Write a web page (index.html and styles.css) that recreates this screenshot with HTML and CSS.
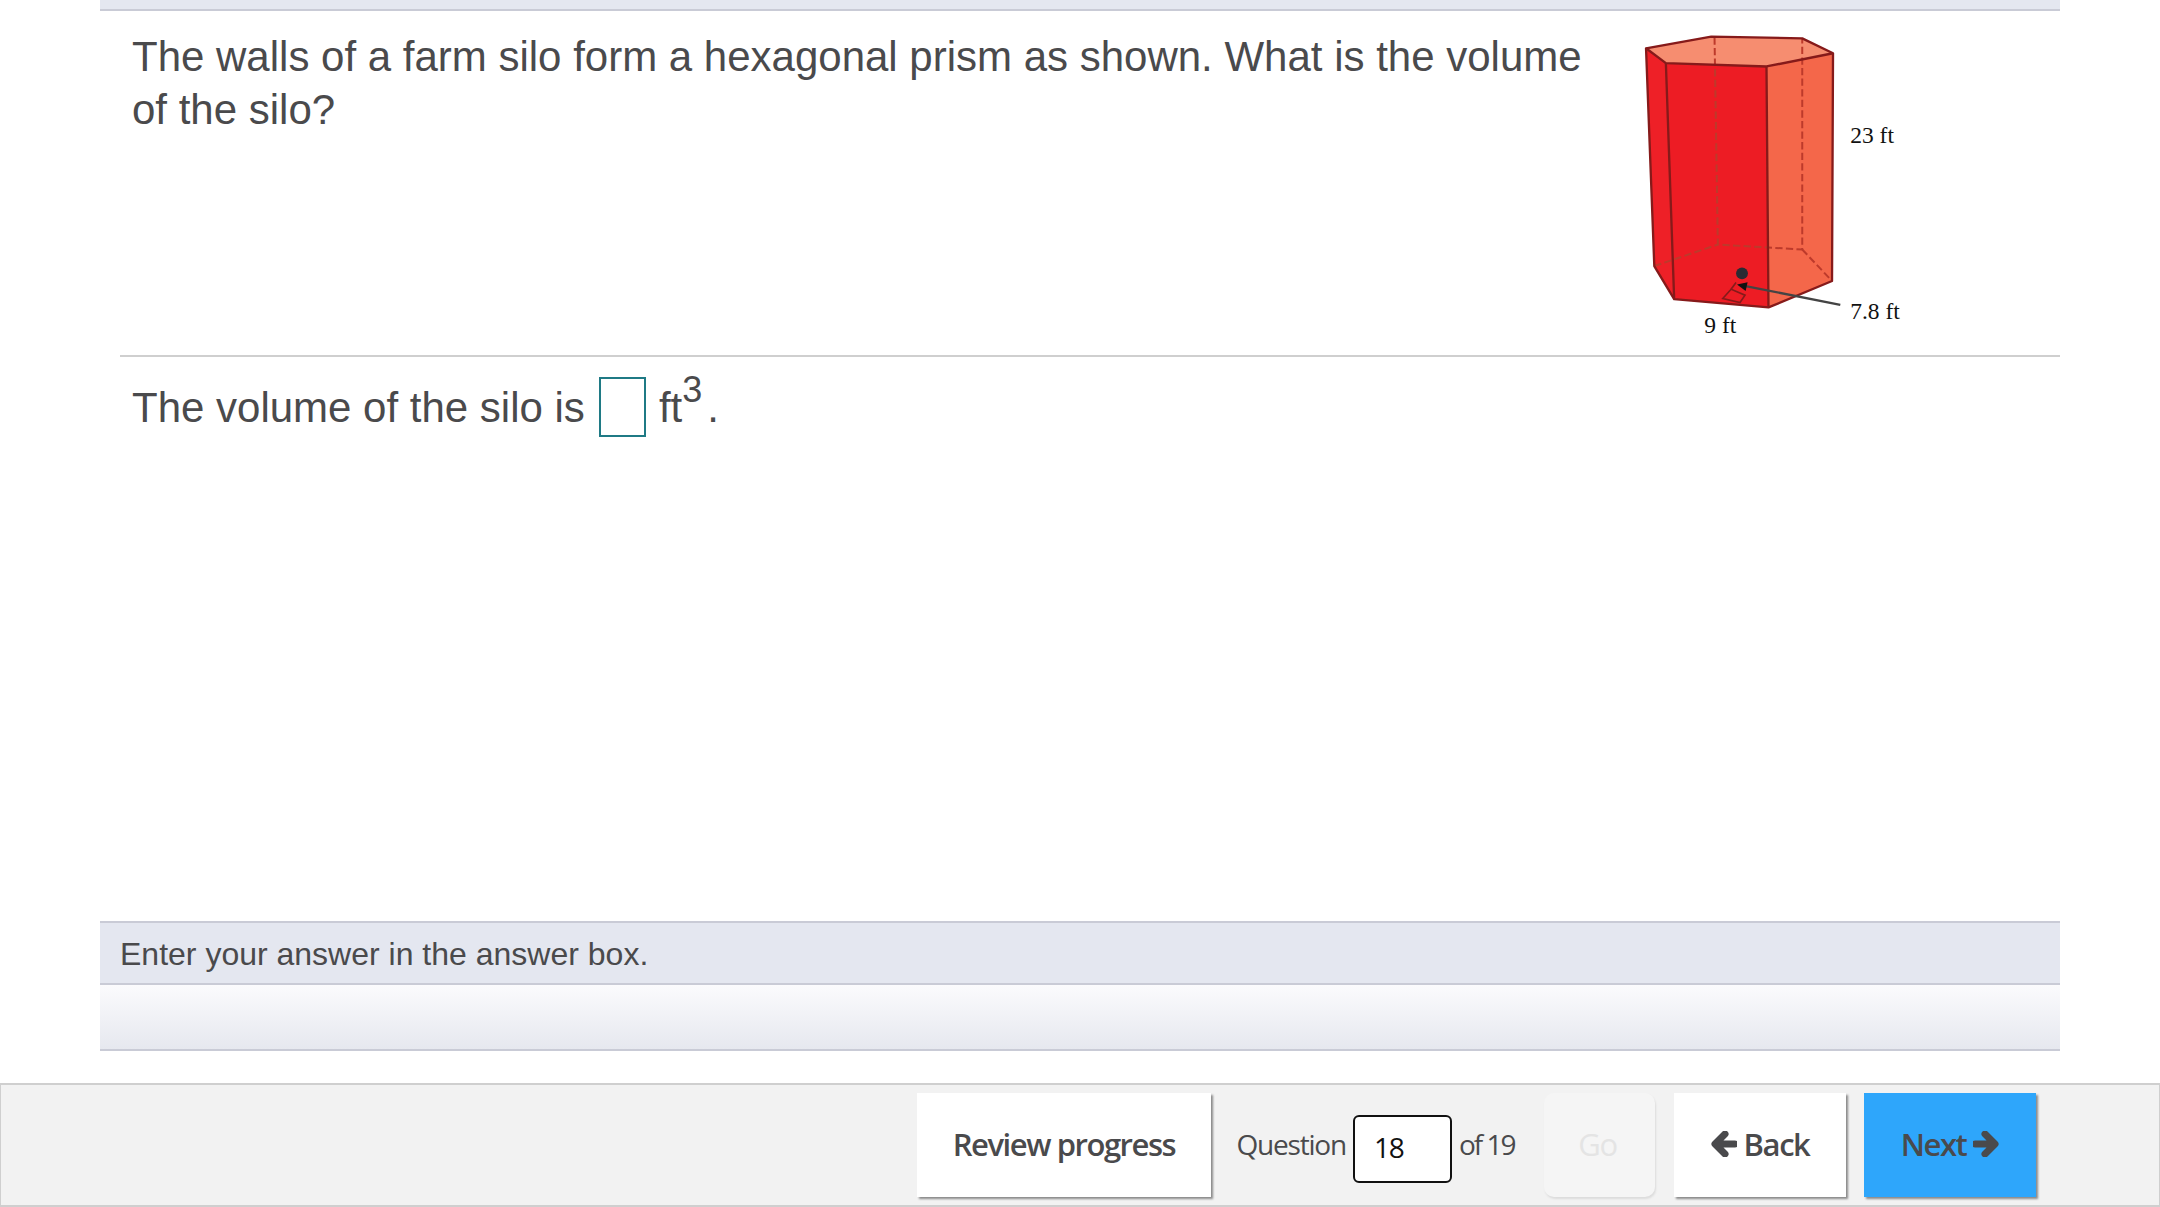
FILE: index.html
```html
<!DOCTYPE html>
<html lang="en">

<head>
    <meta charset="UTF-8">
    <title>Question 18</title>
    <link rel="stylesheet" href="styles.css">
</head>

<body>
    <div id="container">
        <div class="top-strip"></div>

        <div class="question">
            <p class="question-text">The walls of a farm silo form a hexagonal prism as shown. What is the volume of the silo?</p>
            <svg class="silo" viewBox="0 0 1080 1023">
                <!-- faces -->
                <polygon points="133,109 330,74 605,79 698,124 497,164 193,154" fill="#f68d70" />
                <polygon points="497,164 698,124 695,812 503,892" fill="#f4674a" />
                <polygon points="193,154 497,164 503,892 218,867" fill="#ed1c24" />
                <polygon points="133,109 193,154 218,867 158,767" fill="#ee2027" />
                <!-- hidden edges -->
                <g fill="none" stroke="#bd3a2b" stroke-width="6" stroke-dasharray="22 10">
                    <path d="M340,76 L350,702 L605,717 L605,80" />
                    <path d="M158,767 L350,702 M605,717 L695,812" />
                </g>
                <!-- outline -->
                <g fill="none" stroke="#861a1a" stroke-width="7" stroke-linejoin="round">
                    <path d="M133,109 L330,74 L605,79 L698,124 L695,812 L503,892 L218,867 L158,767 Z" />
                    <path d="M133,109 L193,154 L497,164 L698,124" />
                    <path d="M193,154 L218,867 M497,164 L503,892" />
                </g>
                <path d="M405,817 L390,837 L432,855 L417,877 L365,865 L390,837" fill="none" stroke="#861a1a" stroke-width="5" />
                <circle cx="423" cy="789" r="18" fill="#2b2b33" />
                <path d="M720,884 L430,827" stroke="#444" stroke-width="7" />
                <polygon points="408,823 440,816 434,842" fill="#111" />
                <text class="silo-label" x="750" y="395">23 ft</text>
                <text class="silo-label" x="750" y="928">7.8 ft</text>
                <text class="silo-label" x="309" y="968">9 ft</text>
            </svg>
        </div>

        <div class="answer">
            <span>The volume of the silo is</span>
            <span class="answer-box"></span>
            <span class="unit">ft<sup>3</sup>.</span>
        </div>

        <div class="instruction">Enter your answer in the answer box.</div>
        <div class="instruction-bottom"></div>
    </div>

    <div id="footer">
        <button class="btn">Review progress</button>
        <div class="pager">
            <span>Question</span>
            <span class="page-input">18</span>
            <span class="page-total">of 19</span>
        </div>
        <button class="btn btn-go">Go</button>
        <button class="btn btn-back">
            <svg class="arrow" viewBox="0 0 26 26"><path d="M14,3 L4,13 L14,23 M5,13 L24,13" /></svg>
            Back
        </button>
        <button class="btn btn-next">
            Next
            <svg class="arrow" viewBox="0 0 26 26"><path d="M12,3 L22,13 L12,23 M21,13 L2,13" /></svg>
        </button>
    </div>
</body>

</html>
```
FILE: styles.css
```css
* {
    margin: 0;
    padding: 0;
    box-sizing: border-box;
}

body {
    width: 2160px;
    height: 1207px;
    background: #fff;
    color: #4a4a4c;
    font-family: "Liberation Sans", Arial, sans-serif;
    display: flex;
    flex-direction: column;
    overflow: hidden;
}

#container {
    flex: 1;
    padding: 0 100px;
    display: flex;
    flex-direction: column;
}

.top-strip {
    height: 11px;
    background: #e4e7f0;
    border-bottom: 2px solid #c9cbd6;
}

.question {
    height: 346px;
    margin-left: 20px;
    padding-left: 12px;
    border-bottom: 2px solid #cfcfcf;
    display: flex;
    justify-content: space-between;
}

.question-text {
    width: 1480px;
    padding-top: 19px;
    font-size: 42px;
    line-height: 53px;
}

.silo {
    width: 360px;
    height: 341px;
    margin-right: 101px;
}

.silo-label {
    font-family: "Liberation Serif", "Times New Roman", serif;
    font-size: 71px;
    fill: #111;
    stroke: none;
}

.answer {
    height: 564px;
    padding: 20px 0 0 32px;
    display: flex;
    align-items: flex-start;
    font-size: 42px;
    line-height: 62px;
}

.answer span {
    white-space: pre;
}

.answer-box {
    width: 47px;
    height: 60px;
    margin: 0 13px 0 14px;
    border: 2px solid #1f7a85;
}

.unit sup {
    font-size: 36px;
    line-height: 0;
    vertical-align: 20px;
    margin-right: 5px;
}

.instruction {
    height: 64px;
    padding: 12px 0 0 20px;
    background: #e4e7f0;
    border-top: 2px solid #c9cbd6;
    border-bottom: 2px solid #c9cbd6;
    font-size: 32px;
    line-height: 38px;
}

.instruction-bottom {
    height: 66px;
    background: linear-gradient(#fbfbfd, #e6e8ef);
    border-bottom: 2px solid #c9cbd6;
}

#footer {
    height: 124px;
    padding: 8px 123px 8px 0;
    background: #f2f2f2;
    border: 2px solid #cfcfcf;
    border-width: 2px 1px 2px 1px;
    display: flex;
    justify-content: flex-end;
    align-items: flex-start;
    font-family: "Open Sans", sans-serif;
}

.btn {
    height: 104px;
    padding-bottom: 2px;
    border: 0;
    background: #fff;
    color: #4a4a4c;
    font-family: "Open Sans", sans-serif;
    font-size: 31px;
    font-weight: 600;
    letter-spacing: -1.45px;
    box-shadow: 2px 2px 2px #8a8a8a;
    width: 294px;
    display: flex;
    align-items: center;
    justify-content: center;
    gap: 7px;
}

.pager {
    width: 333px;
    height: 104px;
    padding: 0 4px 2px 0;
    display: flex;
    align-items: center;
    justify-content: center;
    gap: 7px;
    font-size: 28px;
    letter-spacing: -1.2px;
}

.page-total {
    letter-spacing: -2px;
}

.page-input {
    width: 99px;
    height: 68px;
    margin-top: 10px;
    padding: 5px 0 0 19px;
    background: #fff;
    border: 2px solid #111;
    border-radius: 6px;
    color: #111;
    line-height: 50px;
}

.btn-go {
    width: 111px;
    padding-right: 4px;
    margin-right: 19px;
    background: #f5f5f5;
    color: #e4e4e4;
    border-radius: 10px;
    font-weight: 400;
    box-shadow: 1px 2px 2px #dcdcdc;
}

.btn-back {
    width: 172px;
    margin-right: 18px;
}

.btn-next {
    width: 172px;
    background: #2ea6fb;
}

.arrow {
    width: 26px;
    height: 26px;
    fill: none;
    stroke: #4a4a4c;
    stroke-width: 7;
    stroke-linecap: round;
    stroke-linejoin: round;
}
```
